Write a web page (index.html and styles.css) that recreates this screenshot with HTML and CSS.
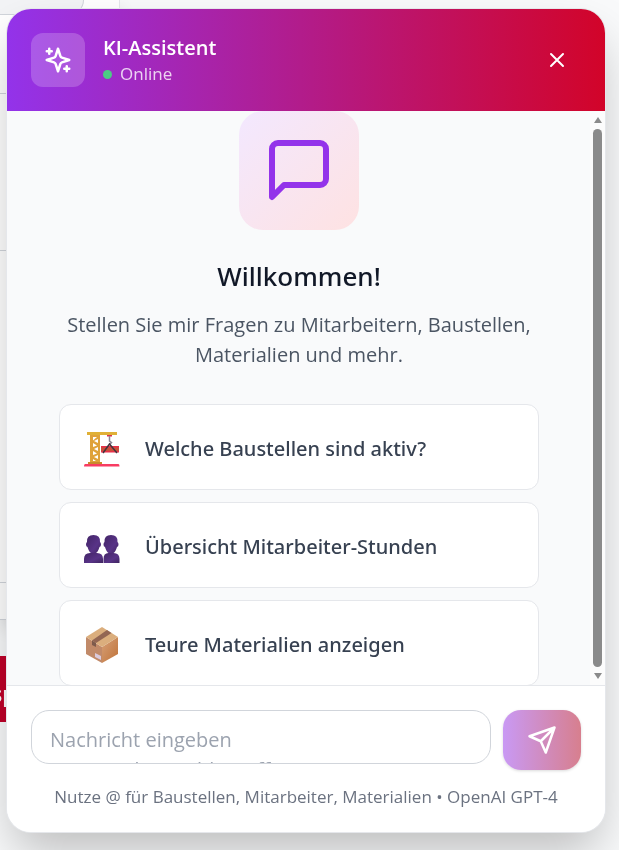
FILE: index.html
```html
<!DOCTYPE html>
<html lang="de">
<head>
  <meta charset="UTF-8" />
  <meta name="viewport" content="width=device-width, initial-scale=1.0"/>
  <title>KI-Assistent</title>
  <link rel="stylesheet" href="styles.css">
</head>
<body>
  <!-- page behind the chat -->
  <div class="backdrop" aria-hidden="true">
    <div class="panel">
      <div class="panel-tab"></div>
      <div class="panel-row"></div>
      <div class="panel-row tall"></div>
      <div class="panel-row taller"></div>
    </div>
    <div class="page-action">sp</div>
  </div>

  <main class="chat">
    <header class="chat-header">
      <div class="avatar">
        <svg viewBox="0 0 24 24" width="30" height="30">
          <path d="m12 3-1.912 5.813a2 2 0 0 1-1.275 1.275L3 12l5.813 1.912a2 2 0 0 1 1.275 1.275L12 21l1.912-5.813a2 2 0 0 1 1.275-1.275L21 12l-5.813-1.912a2 2 0 0 1-1.275-1.275L12 3Z"/>
          <path d="M5 3v4M3 5h4M19 17v4M17 19h4"/>
        </svg>
      </div>
      <div class="title">
        <h1>KI-Assistent</h1>
        <p><span class="dot"></span>Online</p>
      </div>
      <button class="close" type="button" aria-label="Schließen">
        <svg viewBox="0 0 24 24" width="24" height="24"><path d="M6 6l12 12M18 6L6 18"/></svg>
      </button>
    </header>

    <div class="chat-body">
      <div class="messages">
        <div class="welcome-icon">
          <svg viewBox="0 0 24 24" width="72" height="72"><path d="M21 15a2 2 0 0 1-2 2H7l-4 4V5a2 2 0 0 1 2-2h14a2 2 0 0 1 2 2z"/></svg>
        </div>
        <h2>Willkommen!</h2>
        <p class="intro">Stellen Sie mir Fragen zu Mitarbeitern, Baustellen, Materialien und mehr.</p>

        <div class="suggestions">
          <button class="suggestion" type="button">
            <svg viewBox="0 0 36 36" width="36" height="36">
              <path d="M6 3h10v29H6z" fill="#dfa23a"/>
              <path d="M9 6h4l-4 3.500zM14 8v4l-4-2zM9 12l4 2.500L9 16zM14 16v4l-4-2zM9 20l4 2.500L9 24zM14 24v4l-4-2zM9 28l3 2H9z" fill="#fff"/>
              <path d="M3 1h30v3H3z" fill="#e0b036"/>
              <path d="M4 31h14v2H4z" fill="#c98a2c"/>
              <path d="M23 4h5v1.500h-5z" fill="#d9354c"/>
              <path d="M25.500 5v5l2 1.500-2 2" fill="none" stroke="#8b8794" stroke-width="1.500"/>
              <path d="M17 15h18v6H17z" fill="#c9503a"/>
              <path d="M17 15h18v1.500H17zM17 20h18v1.500H17z" fill="#e8304a"/>
              <path d="M19 22l6.500-9L33 22" fill="none" stroke="#41353d" stroke-width="1.500"/>
              <path d="M1 33h33.500q1 0 1 2.500H0Q0 33 1 33z" fill="#f83c62"/>
            </svg>
            <span>Welche Baustellen sind aktiv?</span>
          </button>
          <button class="suggestion" type="button">
            <svg viewBox="0 0 36 36" width="36" height="36">
              <defs>
                <linearGradient id="person" x1="0" y1="0" x2="1" y2="1">
                  <stop offset="0" stop-color="#422466"/>
                  <stop offset=".6" stop-color="#583387"/>
                  <stop offset="1" stop-color="#3e245f"/>
                </linearGradient>
              </defs>
              <g fill="url(#person)">
                <path d="M3 13q-.5-7 6.500-7T16 13q1 .5 1 2.500T15.500 18q-1.500 5-3.500 6v2H7v-2q-2-1-3.500-6Q2 17.500 2 15.500T3 13z"/>
                <path d="M0 34v-4q0-6 6-6h7q6 0 6 6v4z"/>
                <path d="M20.500 13q-.5-7 6.500-7t6.500 7q1 .5 1 2.500T33 18q-1.500 5-3.500 6v2h-5v-2q-2-1-3.500-6-1.500-.5-1.500-2.500t1-2.500z"/>
                <path d="M19.500 34v-4q0-6 5-6h5q6 0 6 6v4z"/>
              </g>
            </svg>
            <span>Übersicht Mitarbeiter-Stunden</span>
          </button>
          <button class="suggestion" type="button">
            <svg viewBox="0 0 36 36" width="36" height="36">
              <defs>
                <linearGradient id="boxRight" x1="0" y1="0" x2="1" y2="1">
                  <stop offset="0" stop-color="#d6a078"/>
                  <stop offset="1" stop-color="#c07339"/>
                </linearGradient>
              </defs>
              <path d="M2 10l16 10v16L2 27z" fill="#c18a69"/>
              <path d="M34 10L18 20v16l16-9z" fill="url(#boxRight)"/>
              <path d="M18 0L2 10l16 10 16-10z" fill="#dbae7d"/>
              <path d="M23 3L8 13.500l4 2.500L27.500 6z" fill="#936653"/>
              <path d="M8 13.500l4 2.500v4l-4-2z" fill="#7d5a4c"/>
              <path d="M11 26l6 3v4l-6-3z" fill="#dbcbdc"/>
            </svg>
            <span>Teure Materialien anzeigen</span>
          </button>
        </div>
      </div>
      <div class="scrollbar" aria-hidden="true">
        <svg viewBox="0 0 10 8" width="10" height="8"><path d="M5 1l4 6H1z"/></svg>
        <div class="thumb"></div>
        <svg viewBox="0 0 10 8" width="10" height="8"><path d="M5 7l4-6H1z"/></svg>
      </div>
    </div>

    <form class="composer">
      <div class="composer-row">
        <textarea rows="1" aria-label="Nachricht" placeholder="Nachricht eingeben&#10;(@Bau oder Suchbegriff)"></textarea>
        <button class="send" type="button" aria-label="Senden">
          <svg viewBox="0 0 24 24" width="30" height="30"><path d="m22 2-7 20-4-9-9-4ZM22 2 11 13"/></svg>
        </button>
      </div>
      <p class="hint">Nutze @ für Baustellen, Mitarbeiter, Materialien • OpenAI GPT-4</p>
    </form>
  </main>
</body>
</html>
```

FILE: styles.css
```css
* {
  box-sizing: border-box;
}

body {
  margin: 0;
  height: 100vh;
  overflow: hidden;
  padding: 9px 14px 18px 7px;
  font-family: 'Segoe UI', 'Open Sans', 'Noto Sans', sans-serif;
  background: #f9fafb;
}

h1, h2, p {
  margin: 0;
}

button, textarea {
  font: inherit;
}

button {
  border: none;
  cursor: pointer;
}

.backdrop {
  position: fixed;
  inset: 0;
}

.panel {
  width: 120px;
  height: 620px;
  background: #fff;
  border-right: 1px solid #e5e7eb;
  border-bottom: 1px solid #d1d5db;
  box-shadow: 0 8px 16px rgba(0, 0, 0, 0.1);
}

.panel-tab {
  width: 84px;
  height: 15px;
  background: #f3f4f6;
  border: 1px solid #d1d5db;
  border-width: 0 1px 1px 0;
  border-radius: 0 0 16px 0;
}

.panel-row {
  height: 79px;
  border-bottom: 1px solid #d1d5db;
}

.panel-row.tall {
  height: 157px;
}

.panel-row.taller {
  height: 332px;
}

.page-action {
  width: 60px;
  height: 66px;
  margin-top: 36px;
  background: #c00029;
  color: #fff;
  font-size: 21px;
  font-weight: 600;
  line-height: 76px;
  text-indent: -8px;
}

.chat {
  position: relative;
  display: flex;
  flex-direction: column;
  height: 100%;
  overflow: hidden;
  background: #fff;
  border-radius: 24px;
  box-shadow: 0 0 0 1px #e5e7eb, 0 25px 50px -6px rgba(0, 0, 0, 0.25);
}

.chat-header {
  display: flex;
  align-items: center;
  gap: 18px;
  padding: 24px;
  background: linear-gradient(90deg, #9333ea, #d20429);
  color: #fff;
}

.avatar {
  display: flex;
  align-items: center;
  justify-content: center;
  width: 54px;
  height: 54px;
  border-radius: 12px;
  background: rgba(255, 255, 255, 0.2);
}

svg {
  flex: none;
}

.avatar svg, .close svg, .send svg, .welcome-icon svg {
  fill: none;
  stroke: currentColor;
  stroke-width: 2;
  stroke-linecap: round;
  stroke-linejoin: round;
}

.title {
  flex: 1;
  padding-top: 2px;
}

.title h1 {
  font-size: 20px;
  font-weight: 600;
  line-height: 26px;
}

.title p {
  display: flex;
  align-items: center;
  gap: 8px;
  font-size: 17px;
  line-height: 26px;
  color: rgba(255, 255, 255, 0.8);
}

.dot {
  width: 9px;
  height: 9px;
  border-radius: 50%;
  background: #4ccb84;
}

.close {
  display: flex;
  padding: 12px;
  background: none;
  color: #fff;
}

.chat-body {
  display: flex;
  flex: 1;
  min-height: 0;
  background: #f9fafb;
}

.messages {
  flex: 1;
  display: flex;
  flex-direction: column;
  align-items: center;
  padding: 0 51px 0 52px;
  overflow: hidden;
  text-align: center;
}

.welcome-icon {
  display: flex;
  flex: none;
  align-items: center;
  justify-content: center;
  width: 120px;
  height: 119px;
  padding-bottom: 2px;
  border-radius: 24px;
  background: linear-gradient(135deg, #f3e8ff, #fee2e2);
  color: #9333ea;
}

.messages h2 {
  margin-top: 28px;
  font-family: 'Segoe UI', 'Noto Sans', sans-serif;
  font-size: 26px;
  font-weight: 500;
  line-height: 36px;
  color: #111827;
}

.intro {
  margin-top: 16px;
  font-size: 20px;
  line-height: 30px;
  color: #4b5563;
}

.suggestions {
  display: flex;
  flex-direction: column;
  gap: 12px;
  width: 100%;
  margin-top: 34px;
}

.suggestion {
  display: flex;
  flex: none;
  align-items: center;
  gap: 25px;
  height: 86px;
  padding: 4px 24px 0;
  background: #fff;
  border: 1px solid #e5e7eb;
  border-radius: 12px;
  font-family: 'Segoe UI', 'Noto Sans', sans-serif;
  font-size: 20px;
  font-weight: 500;
  color: #374151;
}

.suggestion span {
  margin-bottom: 2px;
}

.scrollbar {
  display: flex;
  flex-direction: column;
  align-items: center;
  gap: 5px;
  width: 15px;
  padding: 5px 0;
  background: #fcfcfc;
}

.scrollbar svg {
  fill: #8b8b8b;
}

.thumb {
  flex: 1;
  width: 9px;
  border-radius: 5px;
  background: #8b8b8b;
}

.composer {
  padding: 24px;
  border-top: 1px solid #e5e7eb;
  background: #fff;
}

.composer-row {
  display: flex;
  align-items: flex-start;
  gap: 12px;
}

textarea {
  flex: 1;
  min-width: 0;
  height: 54px;
  padding: 14px 18px;
  border: 1px solid #d1d5db;
  border-radius: 18px;
  resize: none;
  overflow: hidden;
  background: #fff;
  font-size: 20px;
  line-height: 30px;
}

textarea::placeholder {
  color: #9ca3af;
}

.send {
  display: flex;
  align-items: center;
  justify-content: center;
  width: 78px;
  height: 60px;
  border-radius: 18px;
  background: linear-gradient(90deg, #c999f4, #d77f8e);
  box-shadow: 0 1px 3px rgba(0, 0, 0, 0.15);
  color: #fff;
}

.hint {
  margin: 14px -12px -2px;
  font-size: 17px;
  line-height: 26px;
  text-align: center;
  color: #6b7280;
}
```
